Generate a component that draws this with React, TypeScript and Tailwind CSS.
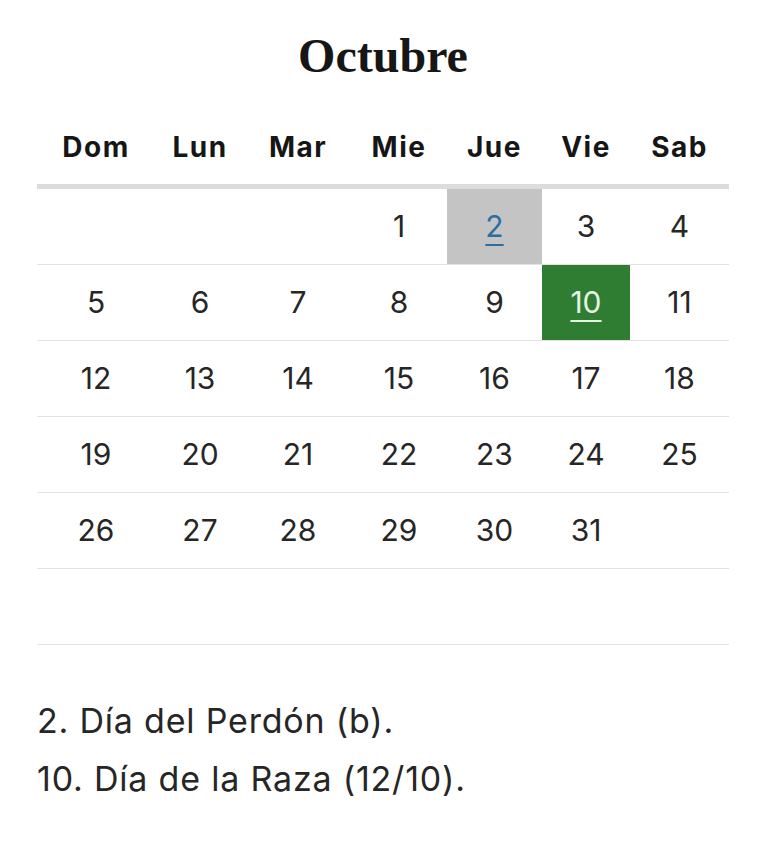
const days = ["Dom", "Lun", "Mar", "Mie", "Jue", "Vie", "Sab"];

const weeks: (number | null)[][] = [
  [null, null, null, 1, 2, 3, 4],
  [5, 6, 7, 8, 9, 10, 11],
  [12, 13, 14, 15, 16, 17, 18],
  [19, 20, 21, 22, 23, 24, 25],
  [26, 27, 28, 29, 30, 31, null],
  [null, null, null, null, null, null, null],
];

const cols = "grid grid-cols-[118px_90px_106px_96px_95px_88px_99px]";

function DayCell({ day }: { day: number | null }) {
  if (day === 2) {
    return (
      <div className="flex items-center justify-center bg-[#c4c4c4]">
        <a href="#" className="text-[#2c6ea3] underline decoration-2 underline-offset-[7px]">
          2
        </a>
      </div>
    );
  }
  if (day === 10) {
    return (
      <div className="flex items-center justify-center bg-[#2e7d32]">
        <a href="#" className="text-[#e6f4e6] underline decoration-2 underline-offset-[7px]">
          10
        </a>
      </div>
    );
  }
  return <div className="flex items-center justify-center">{day ?? ""}</div>;
}

export default function App() {
  return (
    <div className="min-h-screen bg-white font-['Inter',sans-serif] text-[#262626]">
      <div className="ml-[37px] w-[692px]">
        <h2 className="pt-[28px] text-center font-['Liberation_Serif',serif] text-[48px] font-bold leading-[56px] text-[#161616]">
          Octubre
        </h2>

        <div className={`${cols} border-b-[5px] border-[#dcdcdc]`}>
          {days.map((d) => (
            <div
              key={d}
              className="pt-[46px] pb-[20px] text-center text-[28px] font-bold leading-[34px] tracking-[1.5px] text-[#161616]"
            >
              {d}
            </div>
          ))}
        </div>

        {weeks.map((week, i) => (
          <div key={i} className={`${cols} h-[76px] border-b border-[#e2e2e2] text-[30px]`}>
            {week.map((day, j) => (
              <DayCell key={j} day={day} />
            ))}
          </div>
        ))}

        <div className="mt-[47px] text-[34px] leading-[58px] tracking-[0.8px] text-[#262626]">
          <p>2. Día del Perdón (b).</p>
          <p>10. Día de la Raza (12/10).</p>
        </div>
      </div>
    </div>
  );
}
